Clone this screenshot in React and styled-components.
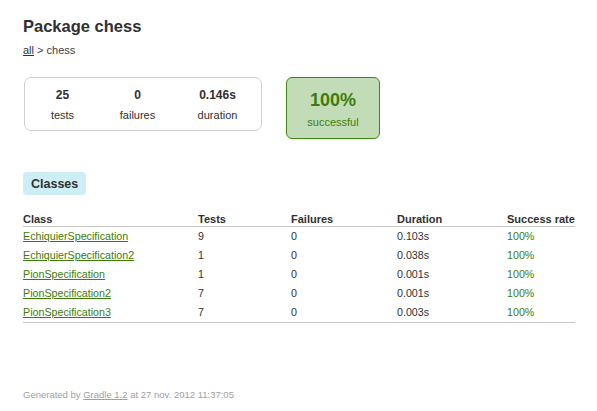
import React from 'react'
import styled, { createGlobalStyle } from 'styled-components'

const Global = createGlobalStyle`
body{
margin:0;
padding:0;
background:#fff;
font-family:"Liberation Sans",Arial,sans-serif;
color:#303030;
}
`
const Content = styled.div`
padding:15px 22px 0 23px;
width:552px;
`
const Title = styled.h1`
margin:0;
font-size:16.5px;
font-weight:bold;
line-height:22px;
color:#303030;
`
const Crumb = styled.div`
margin-top:6px;
font-size:11px;
line-height:14px;
color:#404040;
a{color:#303030;text-decoration:underline;}
`
const SummaryRow = styled.div`
display:flex;
align-items:flex-start;
gap:24px;
margin-top:20px;
margin-left:1px;
`
const SummaryGroup = styled.div`
display:flex;
width:238px;
height:54px;
box-sizing:border-box;
border:1px solid #d0d0d0;
border-radius:7px;
`
const InfoBox = styled.div`
width:${p => p.w}px;
display:flex;
flex-direction:column;
align-items:center;
padding-top:9px;
`
const Counter = styled.div`
font-size:12px;
font-weight:bold;
line-height:16px;
`
const Label = styled.div`
font-size:11px;
line-height:14px;
margin-top:5px;
`
const RateBox = styled.div`
width:94px;
height:62px;
box-sizing:border-box;
border:1px solid #3c8a0c;
border-radius:6px;
background:#c3dcb8;
color:#3c7c0a;
display:flex;
flex-direction:column;
align-items:center;
padding-top:12px;
`
const RateValue = styled.div`
font-size:18px;
font-weight:bold;
line-height:20px;
`
const RateLabel = styled.div`
font-size:11px;
line-height:14px;
margin-top:5px;
`
const Tab = styled.div`
width:fit-content;
margin-top:33px;
padding:2px 8px 0;
height:21px;
line-height:21px;
background:#cdeef5;
border-radius:4px;
font-size:12.5px;
font-weight:bold;
color:#303030;
`
const Table = styled.table`
margin-top:17px;
width:552px;
border-collapse:collapse;
font-size:10.7px;
border-bottom:1px solid #c8c8c8;
`
const Th = styled.th`
text-align:left;
font-size:11px;
font-weight:bold;
padding:0;
height:14px;
line-height:14px;
border-bottom:1px solid #c8c8c8;
width:${p => p.w}px;
`
const Td = styled.td`
padding:0;
height:19px;
line-height:19px;
color:${p => (p.ok ? '#3c7c0a' : '#303030')};
a{color:#3c7c0a;text-decoration:underline;}
`
const Footer = styled.div`
margin-top:66px;
font-size:9.5px;
line-height:12px;
color:#a0a0a0;
a{color:#a0a0a0;text-decoration:underline;}
`

const rows = [
  ['EchiquierSpecification', 9, 0, '0.103s'],
  ['EchiquierSpecification2', 1, 0, '0.038s'],
  ['PionSpecification', 1, 0, '0.001s'],
  ['PionSpecification2', 7, 0, '0.001s'],
  ['PionSpecification3', 7, 0, '0.003s'],
]

export default function App() {
  return (
    <Content>
      <Global />
      <Title>Package chess</Title>
      <Crumb><a href="#">all</a> &gt; chess</Crumb>
      <SummaryRow>
        <SummaryGroup>
          <InfoBox w={75}><Counter>25</Counter><Label>tests</Label></InfoBox>
          <InfoBox w={75}><Counter>0</Counter><Label>failures</Label></InfoBox>
          <InfoBox w={85}><Counter>0.146s</Counter><Label>duration</Label></InfoBox>
        </SummaryGroup>
        <RateBox>
          <RateValue>100%</RateValue>
          <RateLabel>successful</RateLabel>
        </RateBox>
      </SummaryRow>
      <Tab>Classes</Tab>
      <Table>
        <thead>
          <tr>
            <Th w={175}>Class</Th>
            <Th w={93}>Tests</Th>
            <Th w={106}>Failures</Th>
            <Th w={110}>Duration</Th>
            <Th>Success rate</Th>
          </tr>
        </thead>
        <tbody>
          {rows.map(r => (
            <tr key={r[0]}>
              <Td><a href="#">{r[0]}</a></Td>
              <Td>{r[1]}</Td>
              <Td>{r[2]}</Td>
              <Td>{r[3]}</Td>
              <Td ok>100%</Td>
            </tr>
          ))}
        </tbody>
      </Table>
      <Footer>Generated by <a href="#">Gradle 1.2</a> at 27 nov. 2012 11:37:05</Footer>
    </Content>
  )
}
